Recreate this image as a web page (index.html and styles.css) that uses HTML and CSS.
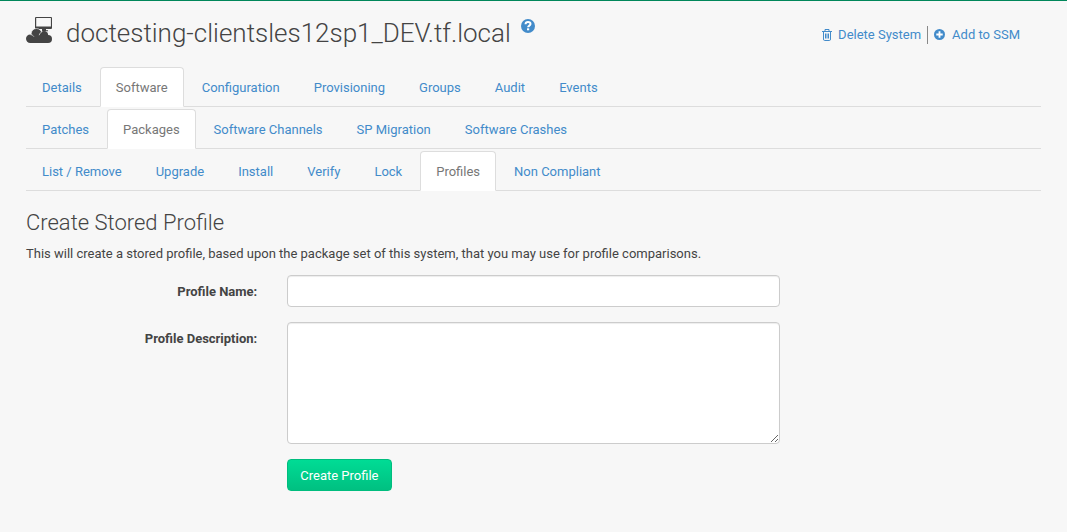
FILE: index.html
```html
<!DOCTYPE html>
<html lang="en">
<head>
<meta charset="utf-8">
<title>Create Stored Profile</title>
<link rel="stylesheet" href="styles.css">
</head>
<body>
<main class="page">
  <header class="header">
    <h1 class="title">
      <svg class="system-icon" viewBox="0 0 26 26" aria-hidden="true">
        <path fill="#444" fill-rule="evenodd" d="M10 0h15q1 0 1 1v10q0 1-1 1h-15q-1 0-1-1V1q0-1 1-1zM10.200 1v8.500h14.700V1zM16 12h4v1.200h2v1h-6z"/>
        <circle cx="10.500" cy="16.800" r="5.300" fill="#444" stroke="#f7f7f7" stroke-width=".6"/>
        <circle cx="18" cy="18.200" r="4.200" fill="#444"/>
        <circle cx="22" cy="22" r="4" fill="#444"/>
        <circle cx="4.200" cy="21.800" r="4.200" fill="#444"/>
        <path fill="#444" d="M4 19h18v7H4z"/>
        <path fill="none" stroke="#f7f7f7" stroke-width=".7" d="M4.500 17.700c1.600.1 2.600.7 3.300 1.900M13.200 18.200c.5-1.600 1.500-2.900 3-3.800"/>
      </svg>
      <span class="name">doctesting-clientsles12sp1_DEV.tf.local</span>
      <a class="help" href="#" aria-label="Help">
        <svg viewBox="0 0 14 14" width="14" height="14" aria-hidden="true"><circle cx="7" cy="7" r="7" fill="#428bca"/><path d="M4.500 5.200c.1-1.500 1.100-2.300 2.500-2.300 1.500 0 2.500.8 2.500 2.100 0 1.600-2.300 1.600-2.400 3.300" fill="none" stroke="#fff" stroke-width="2"/><path fill="#fff" d="M6 9.300h2.200v2H6z"/></svg>
      </a>
    </h1>
    <div class="actions">
      <a href="#"><svg viewBox="0 0 10 12" width="10" height="12" aria-hidden="true"><path fill="none" stroke="#428bca" d="M0 2.500h10M3 2.500V.5h4v2M1.500 2.500v7.500q0 1.500 1 1.500h5q1 0 1-1.500V2.500M3.500 4.500v5M5 4.500v5M6.500 4.500v5"/></svg>Delete System</a>
      <a class="divided" href="#"><svg viewBox="0 0 12 12" width="11" height="11" aria-hidden="true"><circle cx="6" cy="6" r="6" fill="#428bca"/><path stroke="#fff" stroke-width="2" d="M6 2.500v7M2.500 6h7"/></svg>Add to SSM</a>
    </div>
  </header>

  <nav class="navs">
    <ul class="tabs">
      <li><a href="#">Details</a></li>
      <li><a class="active" href="#">Software</a></li>
      <li><a href="#">Configuration</a></li>
      <li><a href="#">Provisioning</a></li>
      <li><a href="#">Groups</a></li>
      <li><a href="#">Audit</a></li>
      <li><a href="#">Events</a></li>
    </ul>
    <ul class="tabs">
      <li><a href="#">Patches</a></li>
      <li><a class="active" href="#">Packages</a></li>
      <li><a href="#">Software Channels</a></li>
      <li><a href="#">SP Migration</a></li>
      <li><a href="#">Software Crashes</a></li>
    </ul>
    <ul class="tabs">
      <li><a href="#">List / Remove</a></li>
      <li><a href="#">Upgrade</a></li>
      <li><a href="#">Install</a></li>
      <li><a href="#">Verify</a></li>
      <li><a href="#">Lock</a></li>
      <li><a class="active" href="#">Profiles</a></li>
      <li><a href="#">Non Compliant</a></li>
    </ul>
  </nav>

  <h2 class="subtitle">Create Stored Profile</h2>
  <p class="intro">This will create a stored profile, based upon the package set of this system, that you may use for profile comparisons.</p>

  <form class="form">
    <label for="name">Profile Name:</label>
    <input class="control" id="name" type="text">
    <label for="description">Profile Description:</label>
    <textarea class="control" id="description"></textarea>
    <button class="submit" type="submit">Create Profile</button>
  </form>
</main>
</body>
</html>
```
FILE: styles.css
```css
* {
  box-sizing: border-box;
}

body {
  margin: 0;
  border-top: 1px solid #00875a;
  background: #f7f7f7;
  color: #444;
  font: 13px/18px Roboto, sans-serif;
}

a {
  color: #428bca;
  text-decoration: none;
}

.page {
  padding: 16px 26px 40px;
}

.header {
  display: flex;
  justify-content: space-between;
  align-items: center;
  padding-right: 21px;
}

.title {
  display: flex;
  align-items: flex-start;
  margin: 0;
  font-size: 26px;
  font-weight: 300;
  line-height: 32px;
}

.system-icon {
  width: 26px;
  height: 26px;
  margin-right: 14px;
}

.help {
  display: flex;
  margin: 2px 0 0 10px;
}

.actions,
.actions a {
  display: flex;
  align-items: center;
}

.actions {
  padding-top: 3px;
}

.actions a {
  gap: 6px;
}

.actions .divided {
  gap: 7px;
  margin-left: 6px;
  padding-left: 6px;
  border-left: 1px solid #888;
}

.navs {
  display: grid;
  gap: 2px;
  margin-top: 18px;
}

.tabs {
  display: flex;
  margin: 0;
  padding: 0;
  list-style: none;
  border-bottom: 1px solid #ddd;
}

.tabs a {
  display: block;
  margin: 0 2px -1px 0;
  padding: 11px 15px 9px;
  border: 1px solid transparent;
  border-radius: 4px 4px 0 0;
}

.tabs .active {
  border-color: #ddd;
  border-bottom-color: #fff;
  background: #fff;
  color: #777;
}

.subtitle {
  margin: 19px 0 9px;
  font-size: 22px;
  font-weight: 300;
  line-height: 26px;
}

.intro {
  margin: 0 0 12px;
}

.form {
  display: grid;
  grid-template-columns: 3fr 6fr 3fr;
  gap: 15px 0;
  margin: 0 -15px;
}

.form label {
  grid-column: 1;
  padding: 8px 15px 0;
  font-weight: 700;
  text-align: right;
}

.control {
  grid-column: 2;
  height: 32px;
  margin: 0 15px;
  padding: 6px 12px;
  border: 1px solid #ccc;
  border-radius: 4px;
  background: #fff;
  box-shadow: inset 0 1px 1px rgba(0, 0, 0, .075);
  color: #555;
  font: inherit;
}

textarea.control {
  height: 122px;
  resize: both;
}

.submit {
  grid-column: 2;
  justify-self: start;
  height: 32px;
  margin-left: 15px;
  padding: 1px 12px 0;
  border: 1px solid #00bd7e;
  border-radius: 4px;
  background: linear-gradient(#00dc95, #00c081);
  color: #fff;
  font: inherit;
}
```
